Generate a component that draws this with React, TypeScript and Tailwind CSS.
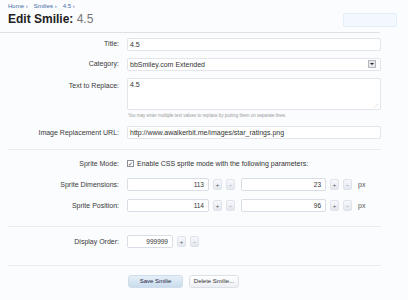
const font = { fontFamily: '"Liberation Sans", Arial, sans-serif' };

function Label({ children }: { children: React.ReactNode }) {
  return (
    <div className="w-[120px] shrink-0 text-right pr-[1px] text-[7px] text-[#3a3a3a]">{children}</div>
  );
}

function Spin({ w, value }: { w: string; value: string }) {
  return (
    <div className="flex items-center gap-[4px]">
      <div className={`${w} h-[13px] rounded-[2px] border border-[#d8dde6] bg-white text-right pr-[4px] text-[6.5px] leading-[11px] text-[#333]`}>
        {value}
      </div>
      <SpinBtn>+</SpinBtn>
      <SpinBtn>-</SpinBtn>
    </div>
  );
}

function SpinBtn({ children }: { children: React.ReactNode }) {
  return (
    <div className="w-[9px] h-[11px] rounded-[2px] border border-[#e0e4ea] bg-gradient-to-b from-[#f6f8fb] to-[#e3e8ef] text-center text-[6px] leading-[10px] text-[#555]">
      {children}
    </div>
  );
}

export default function App() {
  return (
    <div className="w-[408px] h-[300px] bg-[#fbfcfe] relative overflow-hidden" style={font}>
      <div className="px-[8px] pt-[3px] text-[6px] leading-[7px] text-[#3d6aa3] flex gap-[6px]">
        <span>Home ›</span>
        <span>Smilies ›</span>
        <span>4.5 ›</span>
      </div>
      <div className="flex items-center justify-between pl-[8px] pr-[11px]">
        <h1 className="text-[12px] font-bold text-[#222] leading-[14px]">
          Edit Smilie: <span className="font-normal text-[#777]">4.5</span>
        </h1>
        <div className="w-[54px] h-[14px] mt-[3px] border border-[#e3eef8] bg-[#f2f8fd] rounded-[1px]" />
      </div>
      <div className="h-[1px] bg-[#dde0e4] mt-[5px] w-[380px]" />

      <div className="mt-[4px] flex flex-col">
        <div className="flex items-center gap-[7px] h-[14px]">
          <Label>Title:</Label>
          <div className="w-[254px] h-[13px] rounded-[2px] border border-[#e2e5ea] bg-white pl-[2px] text-[7px] leading-[11px] text-[#333]">4.5</div>
        </div>
        <div className="flex items-center gap-[7px] h-[14px] mt-[6px]">
          <Label>Category:</Label>
          <div className="w-[254px] h-[13px] rounded-[2px] border border-[#e2e5ea] bg-white pl-[2px] text-[7px] leading-[11px] text-[#333] flex justify-between">
            <span>bbSmiley.com Extended</span>
            <span className="w-[8px] h-[8px] mt-[1px] mr-[4px] border border-[#b5b8bd] bg-[#e6e7ea] flex items-center justify-center">
              <span className="w-0 h-0 border-l-[2px] border-r-[2px] border-t-[2px] border-l-transparent border-r-transparent border-t-[#222]" />
            </span>
          </div>
        </div>
        <div className="flex items-start gap-[7px] mt-[7px]">
          <div className="pt-[3px]"><Label>Text to Replace:</Label></div>
          <div className="w-[254px] h-[32px] rounded-[2px] border border-[#e2e5ea] bg-white pl-[2px] pt-[2px] text-[7px] leading-[8px] text-[#333] relative">
            4.5
            <span className="absolute right-[2px] bottom-[1px] text-[4px] text-[#aaa] leading-[4px]">⋰</span>
          </div>
        </div>
        <div className="pl-[128px] mt-[3px] text-[4.5px] text-[#999]">
          You may enter multiple text values to replace by putting them on separate lines.
        </div>
        <div className="flex items-center gap-[7px] h-[14px] mt-[6px]">
          <Label>Image Replacement URL:</Label>
          <div className="w-[254px] h-[13px] rounded-[2px] border border-[#e2e5ea] bg-white pl-[2px] text-[7px] leading-[11px] text-[#333]">
            http://www.awalkerbit.me/images/star_ratings.png
          </div>
        </div>
      </div>

      <div className="h-[1px] bg-[#e8ecf2] mt-[9px] ml-[8px] w-[373px]" />

      <div className="flex items-center gap-[7px] h-[12px] mt-[8px]">
        <Label>Sprite Mode:</Label>
        <div className="flex items-center gap-[3px] text-[7px] text-[#333]">
          <span className="w-[7px] h-[7px] border border-[#8a8f98] bg-white flex items-center justify-center text-[6px] leading-[6px] text-[#334]">✓</span>
          Enable CSS sprite mode with the following parameters:
        </div>
      </div>
      <div className="flex items-center gap-[7px] h-[14px] mt-[8px]">
        <Label>Sprite Dimensions:</Label>
        <div className="flex items-center gap-[6px]">
          <Spin w="w-[82px]" value="113" />
          <Spin w="w-[85px]" value="23" />
          <span className="text-[7px] text-[#555]">px</span>
        </div>
      </div>
      <div className="flex items-center gap-[7px] h-[14px] mt-[7px]">
        <Label>Sprite Position:</Label>
        <div className="flex items-center gap-[6px]">
          <Spin w="w-[82px]" value="114" />
          <Spin w="w-[85px]" value="96" />
          <span className="text-[7px] text-[#555]">px</span>
        </div>
      </div>

      <div className="h-[1px] bg-[#e8ecf2] mt-[13px] ml-[8px] w-[373px]" />

      <div className="flex items-center gap-[7px] h-[14px] mt-[8px]">
        <Label>Display Order:</Label>
        <Spin w="w-[46px]" value="999999" />
      </div>

      <div className="h-[1px] bg-[#e8ecf2] mt-[16px] ml-[8px] w-[373px]" />

      <div className="flex items-center gap-[6px] pl-[128px] mt-[9px]">
        <div className="w-[55px] h-[13px] rounded-[3px] border border-[#cfdcea] bg-gradient-to-b from-[#e6eff8] to-[#c9dced] text-center text-[6px] leading-[11px] text-[#224]">
          Save Smilie
        </div>
        <div className="w-[50px] h-[13px] rounded-[3px] border border-[#dde1e6] bg-gradient-to-b from-[#ffffff] to-[#eceff3] text-center text-[6px] leading-[11px] text-[#333]">
          Delete Smilie...
        </div>
      </div>
    </div>
  );
}
